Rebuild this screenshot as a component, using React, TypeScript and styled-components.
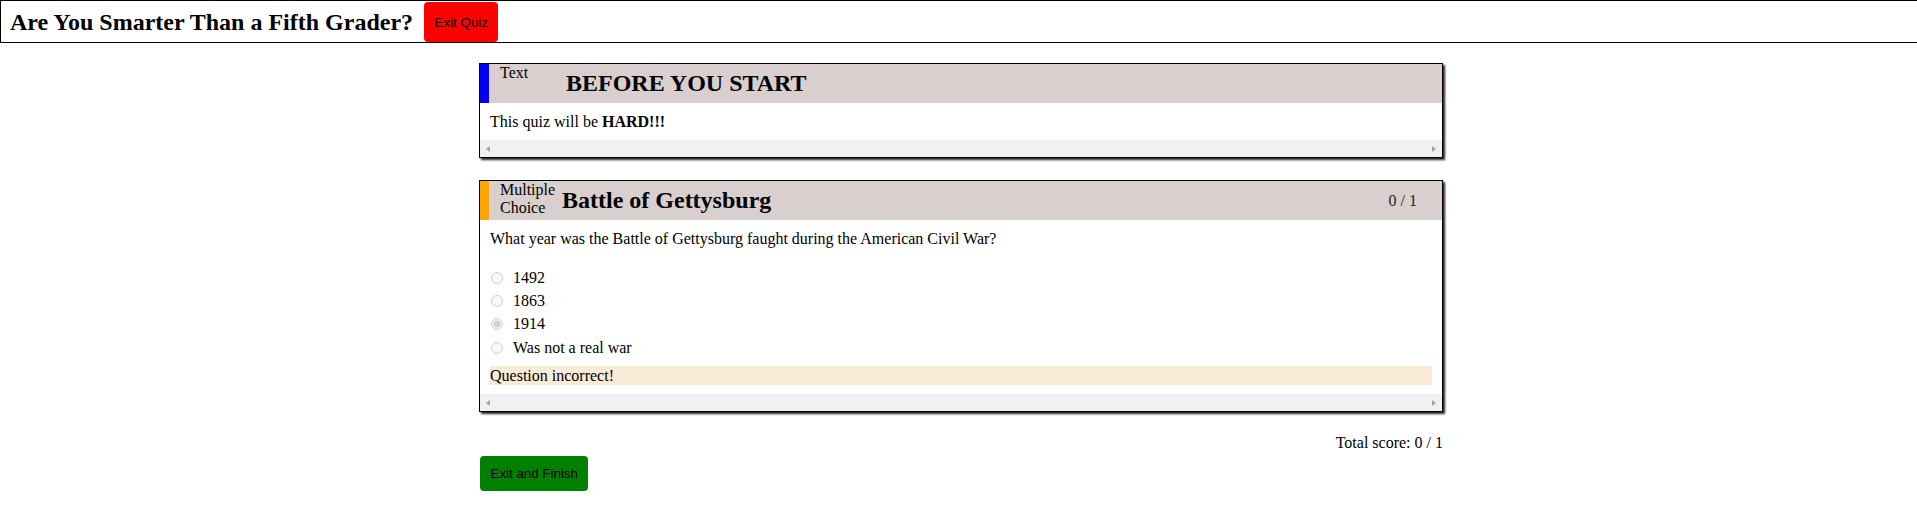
import React from "react";
import styled, { createGlobalStyle } from "styled-components";

const GlobalStyle = createGlobalStyle`
  html, body {
    margin: 0;
    padding: 0;
    background: #ffffff;
  }
  body {
    font-family: "Liberation Serif", "Times New Roman", serif;
    font-size: 16px;
    color: #000000;
  }
  * { box-sizing: border-box; }
`;

const TopBar = styled.header`
  display: flex;
  align-items: flex-end;
  gap: 11px;
  height: 43px;
  border: 1px solid #000;
  border-right: none;
  padding-left: 9px;
`;

const AppTitle = styled.h1`
  margin: 0;
  align-self: center;
  font-size: 24px;
  font-weight: bold;
  line-height: 28px;
`;

const ActionButton = styled.button<{ $bg: string; $h: number }>`
  background: ${(p) => p.$bg};
  height: ${(p) => p.$h}px;
  border: none;
  border-radius: 4px;
  padding: 0 10.5px;
  font-family: "Liberation Sans", Arial, sans-serif;
  font-size: 13.33px;
  color: #000;
  cursor: pointer;
`;

const Main = styled.main`
  width: 964px;
  margin: 20px 0 0 calc(50% - 479.5px);
`;

const Card = styled.section`
  border: 1px solid #000;
  box-shadow: 2px 2px 2px #222;
  margin-bottom: 22px;
  background: #fff;
`;

const CardHeader = styled.div`
  display: flex;
  align-items: stretch;
  background: #d8cfce;
`;

const TypeBar = styled.div<{ $color: string }>`
  width: 9px;
  flex: none;
  background: ${(p) => p.$color};
`;

const TypeLabel = styled.div<{ $width: number }>`
  width: ${(p) => p.$width}px;
  flex: none;
  padding-left: 11px;
  line-height: 18px;
  font-size: 16px;
`;

const CardTitle = styled.h2`
  flex: 1;
  margin: 6px 0;
  font-size: 24px;
  font-weight: bold;
  line-height: 27px;
  align-self: center;
`;

const Points = styled.div`
  align-self: center;
  margin-right: 25px;
  font-size: 16px;
  color: #222;
`;

const CardBody = styled.div`
  padding: 10px 10px 9px 10px;
  line-height: 18px;
`;

const Prompt = styled.p`
  margin: 0 0 18px 0;
`;

const OptionRow = styled.label`
  display: flex;
  align-items: center;
  height: 23.3px;
`;

const Radio = styled.input`
  width: 12px;
  height: 12px;
  margin: 0 10px 0 1px;
`;

const Feedback = styled.div`
  margin-top: 7px;
  background: #faebd7;
  line-height: 19px;
`;

const FakeScrollbar = styled.div`
  height: 17px;
  background: #f1f1f1;
  display: flex;
  align-items: center;
  justify-content: space-between;
  padding: 0 6px;
`;

const Arrow = styled.span<{ $dir: "left" | "right" }>`
  width: 0;
  height: 0;
  border-top: 3.5px solid transparent;
  border-bottom: 3.5px solid transparent;
  ${(p) =>
    p.$dir === "left"
      ? "border-right: 4px solid #a3a3a3;"
      : "border-left: 4px solid #a3a3a3;"}
`;

const TotalLine = styled.div`
  text-align: right;
  margin-top: 17px;
  line-height: 18px;
`;

const FinishRow = styled.div`
  margin-top: 4px;
  margin-left: 1px;
`;

type Question = {
  kind: string;
  color: string;
  labelWidth: number;
  title: string;
  points?: string;
  body: React.ReactNode;
};

const Scroller = () => (
  <FakeScrollbar>
    <Arrow $dir="left" />
    <Arrow $dir="right" />
  </FakeScrollbar>
);

const options = ["1492", "1863", "1914", "Was not a real war"];

export default function App() {
  const questions: Question[] = [
    {
      kind: "Text",
      color: "#0000ff",
      labelWidth: 77,
      title: "BEFORE YOU START",
      body: (
        <CardBody>
          This quiz will be <b>HARD!!!</b>
        </CardBody>
      ),
    },
    {
      kind: "Multiple Choice",
      color: "#ffa500",
      labelWidth: 73,
      title: "Battle of Gettysburg",
      points: "0 / 1",
      body: (
        <CardBody>
          <Prompt>
            What year was the Battle of Gettysburg faught during the American
            Civil War?
          </Prompt>
          {options.map((o) => (
            <OptionRow key={o}>
              <Radio
                type="radio"
                name="q1"
                disabled
                checked={o === "1914"}
                readOnly
              />
              {o}
            </OptionRow>
          ))}
          <Feedback>Question incorrect!</Feedback>
        </CardBody>
      ),
    },
  ];

  return (
    <>
      <GlobalStyle />
      <TopBar>
        <AppTitle>Are You Smarter Than a Fifth Grader?</AppTitle>
        <ActionButton $bg="#ff0000" $h={40}>
          Exit Quiz
        </ActionButton>
      </TopBar>
      <Main>
        {questions.map((q) => (
          <Card key={q.title}>
            <CardHeader>
              <TypeBar $color={q.color} />
              <TypeLabel $width={q.labelWidth}>{q.kind}</TypeLabel>
              <CardTitle>{q.title}</CardTitle>
              {q.points && <Points>{q.points}</Points>}
            </CardHeader>
            {q.body}
            <Scroller />
          </Card>
        ))}
        <TotalLine>Total score: 0 / 1</TotalLine>
        <FinishRow>
          <ActionButton $bg="#008000" $h={35}>
            Exit and Finish
          </ActionButton>
        </FinishRow>
      </Main>
    </>
  );
}
